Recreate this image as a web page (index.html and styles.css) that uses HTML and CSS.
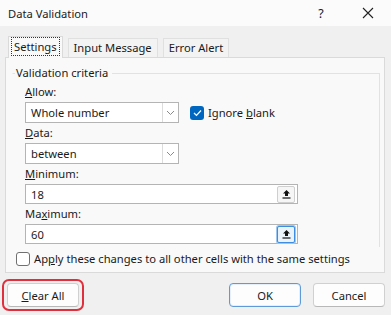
FILE: index.html
```html
<!DOCTYPE html>
<html lang="en">
<head>
  <meta charset="UTF-8">
  <title>Data Validation</title>
  <link rel="stylesheet" href="styles.css">
</head>
<body>
  <div class="dialog">
    <div class="titlebar">
      <span class="title">Data Validation</span>
      <span class="help">?</span>
      <span class="close">
        <svg width="12" height="12" viewBox="0 0 12 12"><path d="M1 1L11 11M11 1L1 11" stroke="#222" stroke-width="1.1" fill="none"/></svg>
      </span>
    </div>

    <div class="tabs">
      <div class="tab active"><span class="focus">Settings</span></div>
      <div class="tab">Input Message</div>
      <div class="tab">Error Alert</div>
    </div>

    <div class="panel">
      <div class="group">
        <div class="legend">Validation criteria</div>

        <div class="field-label first"><u>A</u>llow:</div>
        <div class="row">
          <div class="select">
            <span>Whole number</span>
            <span class="drop"><svg width="9" height="6" viewBox="0 0 9 6"><path d="M1 1L4.5 4.5L8 1" stroke="#8a8a8a" stroke-width="1" fill="none"/></svg></span>
          </div>
          <label class="check-label">
            <span class="check on"><svg width="9" height="8" viewBox="0 0 9 8"><path d="M1 4L3.5 6.5L8 1.5" stroke="#fff" stroke-width="1.2" fill="none"/></svg></span>
            <span>Ignore <u>b</u>lank</span>
          </label>
        </div>

        <div class="field-label"><u>D</u>ata:</div>
        <div class="select">
          <span>between</span>
          <span class="drop"><svg width="9" height="6" viewBox="0 0 9 6"><path d="M1 1L4.5 4.5L8 1" stroke="#8a8a8a" stroke-width="1" fill="none"/></svg></span>
        </div>

        <div class="field-label"><u>M</u>inimum:</div>
        <div class="input">
          <span>18</span>
          <span class="ref"><svg width="9" height="10" viewBox="0 0 9 10"><path d="M4.5 1L1 4.5H3V7H6V4.5H8Z" fill="#111"/><path d="M0.5 9H8.5" stroke="#111" stroke-width="1.2"/></svg></span>
        </div>

        <div class="field-label">Ma<u>x</u>imum:</div>
        <div class="input">
          <span>60</span>
          <span class="ref hot"><svg width="9" height="10" viewBox="0 0 9 10"><path d="M4.5 1L1 4.5H3V7H6V4.5H8Z" fill="#111"/><path d="M0.5 9H8.5" stroke="#111" stroke-width="1.2"/></svg></span>
        </div>
      </div>

      <label class="check-label apply">
        <span class="check"></span>
        <span>Ap<u>p</u>ly these changes to all other cells with the same settings</span>
      </label>
    </div>

    <div class="buttons">
      <div class="highlight">
        <button class="btn"><u>C</u>lear All</button>
      </div>
      <div class="spacer"></div>
      <button class="btn default">OK</button>
      <button class="btn">Cancel</button>
    </div>
  </div>
</body>
</html>
```

FILE: styles.css
```css
body {
  margin: 0;
  font-family: "Noto Sans", "Open Sans", sans-serif;
  font-size: 11.2px;
  color: #1a1a1a;
}
.dialog {
  width: 391px;
  height: 315px;
  background-color: #f0f0f0;
  overflow: hidden;
}
.titlebar {
  height: 26px;
  background-color: #fbfbfb;
  display: flex;
  align-items: center;
  padding-left: 8px;
}
.title {
  flex: 1;
}
.help {
  width: 20px;
  font-size: 12.5px;
  margin-right: 14px;
  text-align: center;
}
.close {
  width: 46px;
  display: flex;
  justify-content: center;
}
.tabs {
  display: flex;
  padding: 10px 0 0 8px;
  height: 21px;
  align-items: flex-end;
  gap: 5px;
}
.tab {
  height: 18px;
  padding: 0 5px;
  line-height: 18px;
  border: 1px solid #e0e0e0;
  border-bottom: none;
  background-color: #f3f3f3;
}
.tab.active {
  height: 21px;
  line-height: 20px;
  background-color: #f9f9f9;
  padding: 0 2px;
  position: relative;
  z-index: 1;
  margin-bottom: -1px;
  border-color: #dadada;
}
.focus {
  border: 1px dotted #333;
  padding: 1px 2px;
}
.panel {
  margin: 0 6px 0 5px;
  height: 208px;
  background-color: #f9f9f9;
  border: 1px solid #dadada;
  padding: 6px 4px 0 6px;
}
.group {
  border: 1px solid #e2e2e2;
  border-left-color: #f9f9f9;
  border-bottom: none;
  padding: 0 0 3px 12px;
  position: relative;
  margin-top: 9px;
}
.legend {
  position: absolute;
  top: -9px;
  left: 2px;
  background-color: #f9f9f9;
  padding: 0 4px 0 1px;
  line-height: 16px;
}
.field-label {
  height: 14px;
  line-height: 14px;
  margin: 3px 0 3px;
}
.field-label.first {
  margin-top: 11px;
}
.row {
  display: flex;
  align-items: center;
}
.select, .input {
  box-sizing: border-box;
  height: 21px;
  border: 1px solid #b4b4b4;
  background-color: #fff;
  display: flex;
  align-items: center;
  padding-left: 5px;
}
.select {
  width: 154px;
}
.input {
  height: 20px;
  width: 273px;
}
.select span:first-child, .input span:first-child {
  flex: 1;
}
.drop {
  width: 15px;
  height: 19px;
  border-left: 1px solid #dcdcdc;
  display: flex;
  align-items: center;
  justify-content: center;
}
.ref {
  width: 16px;
  height: 15px;
  margin-right: 2px;
  border: 1px solid #cfcfcf;
  border-radius: 2px;
  background-color: #f6f6f6;
  display: flex;
  align-items: center;
  justify-content: center;
}
.ref.hot {
  border: 1px solid #3d8ee0;
  background-color: #eaf3fc;
  box-shadow: 0 0 0 1px #9cc6ef;
}
.check-label {
  display: flex;
  align-items: center;
  gap: 4px;
}
.row .check-label {
  margin-left: 11px;
}
.check {
  width: 12px;
  height: 12px;
  border: 1px solid #707070;
  border-radius: 3px;
  background-color: #fff;
  display: flex;
  align-items: center;
  justify-content: center;
}
.check.on {
  width: 14px;
  height: 14px;
  border: none;
  background-color: #0067c0;
}
.apply {
  margin: 4px 0 0 4px;
}
.buttons {
  display: flex;
  align-items: center;
  padding: 6px 6px 0 2px;
  gap: 12px;
}
.spacer {
  flex: 1;
}
.highlight {
  border: 2px solid #e0303d;
  border-radius: 7px;
  padding: 2px 3px;
}
.btn {
  width: 72px;
  height: 24px;
  font-family: inherit;
  font-size: 11.2px;
  color: #1a1a1a;
  background-color: #fdfdfd;
  border: 1px solid #d0d0d0;
  border-bottom-color: #b8b8b8;
  border-radius: 4px;
  padding: 0;
}
.btn.default {
  border: 1px solid #5e9ad8;
  box-shadow: inset 0 0 0 1px #e4effb;
}
```
